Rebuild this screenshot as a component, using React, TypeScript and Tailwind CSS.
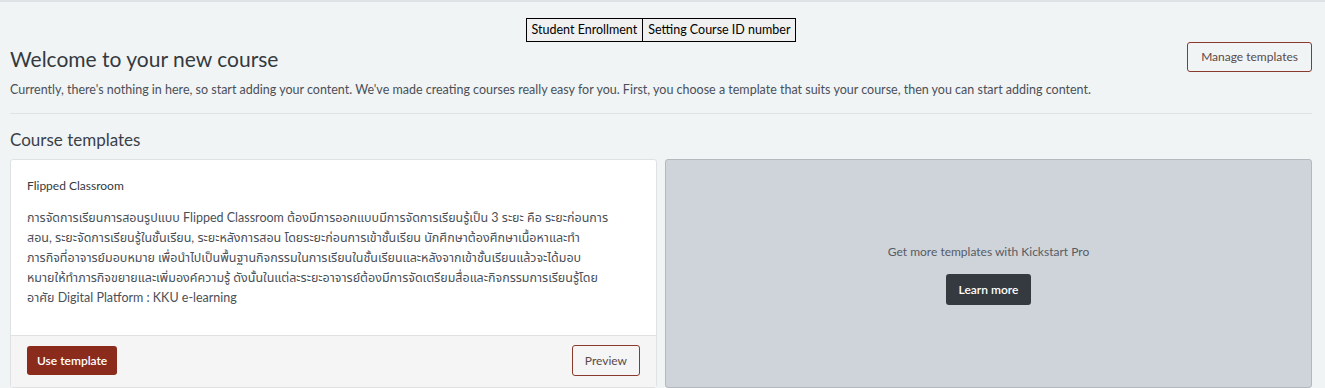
import React from "react";

export default function App() {
  const font = { fontFamily: 'Lato, "Noto Sans Thai", "Noto Sans", Tahoma, sans-serif' };
  return (
    <div className="min-h-[388px] w-full bg-[#f1f4f5] border-t-2 border-[#dfe2e5] text-[#3a4048]" style={font}>
      <div className="pl-[10px] pr-[13px]">
        <div className="flex justify-center pt-[16px]">
          <button className="h-[24px] px-[5px] border border-black bg-[#f0f0f0] text-[12.5px] text-black leading-none">Student Enrollment</button>
          <button className="h-[24px] px-[5px] border border-black border-l-0 bg-[#f0f0f0] text-[12.5px] text-black leading-none">Setting Course ID number</button>
        </div>
        <div className="flex items-start justify-between">
          <h2 className="mt-[3px] text-[21px] leading-[28px] text-[#343a40]">Welcome to your new course</h2>
          <button className="mt-[0px] h-[30px] px-[13px] rounded-[3px] border border-[#8a3a2c] text-[12px] text-[#5a4a48]">Manage templates</button>
        </div>
        <p className="mt-[8px] text-[12.5px] leading-[18px] text-[#4a5058]">
          Currently, there's nothing in here, so start adding your content. We've made creating courses really easy for you. First, you choose a template that suits your course, then you can start adding content.
        </p>
        <div className="mt-[14px] border-t border-[#dfe3e6]" />
        <h3 className="mt-[15px] text-[17px] leading-[22px] text-[#3a4048]">Course templates</h3>
        <div className="mt-[8px] grid grid-cols-2 gap-2">
          <div className="flex h-[229px] flex-col rounded-[3px] border border-[#dfe1e3] bg-white">
            <div className="flex-1 px-[16px] pt-[18px]">
              <div className="text-[12px] leading-[16px] text-[#343a40]">Flipped Classroom</div>
              <p className="mt-[14px] whitespace-nowrap text-[12.5px] leading-[20px] text-[#4a5058]">
                การจัดการเรียนการสอนรูปแบบ Flipped Classroom ต้องมีการออกแบบมีการจัดการเรียนรู้เป็น 3 ระยะ คือ ระยะก่อนการ
                <br />
                สอน, ระยะจัดการเรียนรู้ในชั้นเรียน, ระยะหลังการสอน โดยระยะก่อนการเข้าชั้นเรียน นักศึกษาต้องศึกษาเนื้อหาและทำ
                <br />
                ภารกิจที่อาจารย์มอบหมาย เพื่อนำไปเป็นพื้นฐานกิจกรรมในการเรียนในชั้นเรียนและหลังจากเข้าชั้นเรียนแล้วจะได้มอบ
                <br />
                หมายให้ทำภารกิจขยายและเพิ่มองค์ความรู้ ดังนั้นในแต่ละระยะอาจารย์ต้องมีการจัดเตรียมสื่อและกิจกรรมการเรียนรู้โดย
                <br />
                อาศัย Digital Platform : KKU e-learning
              </p>
            </div>
            <div className="flex h-[52px] items-center justify-between border-t border-[#dfe1e3] bg-[#f5f5f5] px-[16px] pb-[2px]">
              <button className="h-[29px] px-[10px] rounded-[3px] bg-[#8a2b1c] text-[12px] font-semibold text-white">Use template</button>
              <button className="h-[31px] px-[12px] rounded-[3px] border border-[#8a3a2c] text-[12px] text-[#5a4a48]">Preview</button>
            </div>
          </div>
          <div className="flex h-[229px] flex-col items-center justify-center rounded-[3px] border border-[#b5b8bd] bg-[#cfd3da]">
            <div className="mt-[2px] text-[12px] leading-[16px] text-[#565c63]">Get more templates with Kickstart Pro</div>
            <button className="mt-[14px] h-[31px] px-[13px] rounded-[3px] bg-[#343a40] text-[12px] font-semibold text-white">Learn more</button>
          </div>
        </div>
      </div>
    </div>
  );
}
